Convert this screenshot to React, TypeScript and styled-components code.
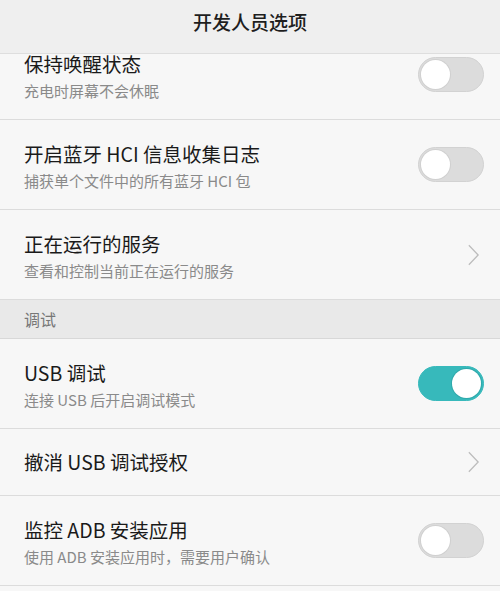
import styled, { createGlobalStyle } from 'styled-components'

const GlobalStyle = createGlobalStyle`
  html, body {
    margin: 0;
    padding: 0;
    background: #f7f7f7;
  }
  * {
    box-sizing: border-box;
  }
`

type Item =
  | { kind: 'toggle'; title: string; sub?: string; on?: boolean }
  | { kind: 'link'; title: string; sub?: string }
  | { kind: 'section'; title: string }

const ITEMS: Item[] = [
  { kind: 'toggle', title: '保持唤醒状态', sub: '充电时屏幕不会休眠' },
  { kind: 'toggle', title: '开启蓝牙 HCI 信息收集日志', sub: '捕获单个文件中的所有蓝牙 HCI 包' },
  { kind: 'link', title: '正在运行的服务', sub: '查看和控制当前正在运行的服务' },
  { kind: 'section', title: '调试' },
  { kind: 'toggle', title: 'USB 调试', sub: '连接 USB 后开启调试模式', on: true },
  { kind: 'link', title: '撤消 USB 调试授权' },
  { kind: 'toggle', title: '监控 ADB 安装应用', sub: '使用 ADB 安装应用时，需要用户确认' },
]

export default function App() {
  return (
    <>
      <GlobalStyle />
      <Page>
        <Header>开发人员选项</Header>
        <Viewport>
          <List>
            {ITEMS.map((item, i) =>
              item.kind === 'section' ? (
                <Section key={i}>{item.title}</Section>
              ) : (
                <Row key={i} $compact={!item.sub}>
                  <Texts $compact={!item.sub}>
                    <Title>{item.title}</Title>
                    {item.sub && <Sub>{item.sub}</Sub>}
                  </Texts>
                  {item.kind === 'toggle' ? (
                    <Switch $on={!!item.on}>
                      <Knob $on={!!item.on} />
                    </Switch>
                  ) : (
                    <Chevron viewBox="0 0 14 24" aria-hidden>
                      <path d="M2 1.5 L12 12 L2 22.5" />
                    </Chevron>
                  )}
                </Row>
              ),
            )}
          </List>
        </Viewport>
      </Page>
    </>
  )
}

const Page = styled.div`
  width: 500px;
  height: 591px;
  display: flex;
  flex-direction: column;
  overflow: hidden;
  background: #f7f7f7;
  font-family: 'Noto Sans CJK SC', 'Noto Sans', sans-serif;
`

const Header = styled.div`
  flex: none;
  height: 54px;
  padding-bottom: 11px;
  display: flex;
  align-items: center;
  justify-content: center;
  background: #efefef;
  border-bottom: 1px solid #dedede;
  font-size: 19px;
  font-weight: 500;
  color: #1e1e1e;
`

const Viewport = styled.div`
  flex: 1;
  overflow: hidden;
`

/* the list is scrolled so that the first item is partly hidden */
const List = styled.div`
  margin-top: -24px;
`

const Row = styled.div<{ $compact: boolean }>`
  height: ${(p) => (p.$compact ? 67 : 90)}px;
  display: flex;
  align-items: center;
  padding: 0 16px 0 24px;
  border-bottom: 1px solid #dcdcdc;
  background: #f7f7f7;
`

const Texts = styled.div<{ $compact: boolean }>`
  flex: 1;
  display: flex;
  flex-direction: column;
  padding-top: ${(p) => (p.$compact ? 0 : 4)}px;
`

const Title = styled.div`
  font-size: 19.5px;
  line-height: 26px;
  color: #1a1a1a;
`

const Sub = styled.div`
  margin-top: 3px;
  font-size: 15px;
  line-height: 22px;
  color: #8a8a8a;
`

const Section = styled.div`
  height: 39px;
  display: flex;
  align-items: center;
  padding: 0 24px;
  background: #e9e9e9;
  border-bottom: 1px solid #d8d8d8;
  font-size: 16px;
  color: #777;
`

const Switch = styled.div<{ $on: boolean }>`
  flex: none;
  width: 66px;
  height: 35px;
  border-radius: 18px;
  padding: 2px;
  display: flex;
  justify-content: ${(p) => (p.$on ? 'flex-end' : 'flex-start')};
  align-items: center;
  background: ${(p) => (p.$on ? '#37b9bb' : '#dcdcdc')};
  border: 1px solid ${(p) => (p.$on ? '#37b9bb' : '#d2d2d2')};
`

const Knob = styled.div<{ $on: boolean }>`
  width: 29px;
  height: 29px;
  border-radius: 50%;
  background: #fff;
  box-shadow: 0 0 0 1px ${(p) => (p.$on ? '#2fa9ab' : '#d0d0d0')};
`

const Chevron = styled.svg`
  flex: none;
  width: 13px;
  height: 24px;
  margin-right: 4px;
  fill: none;
  stroke: #bdbdbd;
  stroke-width: 1.4;
`
